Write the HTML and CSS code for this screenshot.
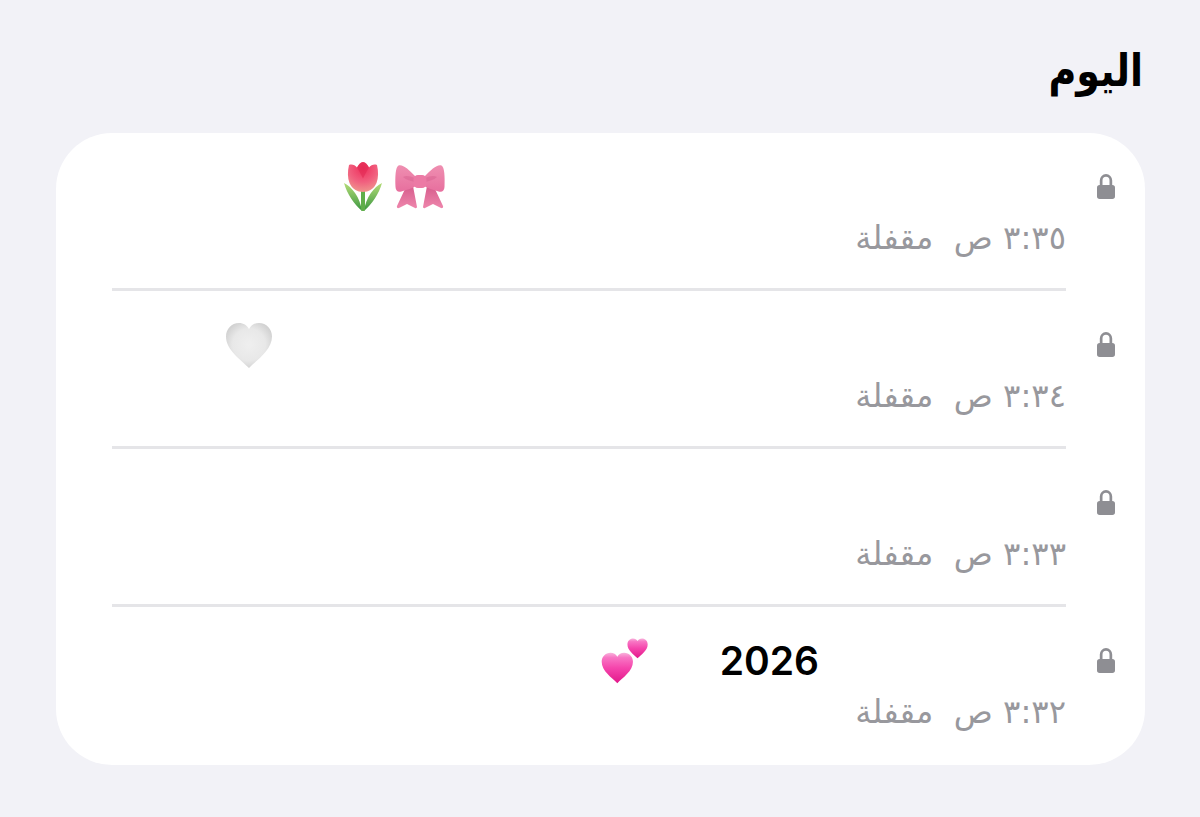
FILE: index.html
```html
<!DOCTYPE html>
<html lang="ar" dir="rtl">
<head>
<meta charset="utf-8">
<title>اليوم</title>
<link rel="stylesheet" href="styles.css">
</head>
<body>
<svg class="defs" width="0" height="0" aria-hidden="true">
  <defs>
    <linearGradient id="pink" x1="0" y1="0" x2="0" y2="1">
      <stop offset="0" stop-color="#f8b4dc"/>
      <stop offset=".16" stop-color="#f876c4"/>
      <stop offset=".5" stop-color="#f545ac"/>
      <stop offset="1" stop-color="#e2188a"/>
    </linearGradient>
    <radialGradient id="silver" cx=".5" cy=".48" r=".55">
      <stop offset="0" stop-color="#efefef"/>
      <stop offset=".65" stop-color="#e8e8e8"/>
      <stop offset="1" stop-color="#d2d2d2"/>
    </radialGradient>
    <radialGradient id="tulip" cx=".5" cy=".2" r=".85">
      <stop offset="0" stop-color="#ee2f5c"/>
      <stop offset=".55" stop-color="#f1607f"/>
      <stop offset="1" stop-color="#ef9c8f"/>
    </radialGradient>
    <linearGradient id="leaf" x1="0" y1="0" x2="0" y2="1">
      <stop offset="0" stop-color="#b4dc78"/>
      <stop offset="1" stop-color="#3a9640"/>
    </linearGradient>
    <linearGradient id="ribbon" x1="0" y1="0" x2="0" y2="1">
      <stop offset="0" stop-color="#ef8fb1"/>
      <stop offset="1" stop-color="#e76f9e"/>
    </linearGradient>
    <linearGradient id="tail" x1="0" y1="0" x2="0" y2="1">
      <stop offset="0" stop-color="#d65c8c"/>
      <stop offset="1" stop-color="#ee86ac"/>
    </linearGradient>
    <path id="heart" d="M24 46C16 38 1 28 1 14.500 1 7 6.500 1 14 1c4.500 0 8 2.200 10 6 2-3.800 5.500-6 10-6 7.500 0 13 6 13 13.500C47 28 32 38 24 46z"/>
    <path id="lock" d="M2.800 11V6.500a6.200 6.500 0 0 1 12.400 0V11h.1A2.700 2.700 0 0 1 18 13.700v8.600a2.700 2.700 0 0 1-2.700 2.700H2.700A2.700 2.700 0 0 1 0 22.300v-8.600A2.700 2.700 0 0 1 2.700 11zm2.700 0h7V6.500a3.500 3.700 0 0 0-7 0z"/>
  </defs>
</svg>
<main class="screen">
  <h1 class="title">اليوم</h1>
  <section class="card">
    <article class="row">
      <svg class="lock" viewBox="0 0 18 25"><use href="#lock"/></svg>
      <div class="body">
        <div class="msg msg-flowers">
          <svg class="bow" viewBox="0 0 50 46">
            <path fill="url(#tail)" d="M10 25 2 42c-.5 1.500.5 2.500 2 2l8-4 8 4c1 .5 2 0 2-1l-4-21zM32 22l-4 21c0 1 1 1.500 2 1l8-4 8 4c1.500.5 2.500-.5 2-2l-8-17z"/>
            <path fill="url(#ribbon)" d="M20 12C14 6 8 0 3.500 1.500 .5 3 0 13 .5 23c.2 4 2.500 5.500 6 4.500 5-1.500 10-3 13.500-5zM30 12C36 6 42 0 46.500 1.500c3 1.500 3.500 11.500 3 21.500-.2 4-2.500 5.500-6 4.500-5-1.500-10-3-13.500-5z"/>
            <path fill="#d25a8a" opacity=".4" d="M20 14C15 12 11 11 8 13c3 3 8 4 12 5zM30 14c5-2 9-3 12-1-3 3-8 4-12 5z"/>
            <rect x="18.500" y="11" width="13" height="13" rx="4.500" fill="#ec7aa5"/>
          </svg>
          <svg class="tulip" viewBox="0 0 42 50">
            <path fill="url(#leaf)" d="M20 49C12 42 5 32 2 21c8 4 16 14 18 28zM22 49c8-7 15-17 18-28-8 4-16 14-18 28z"/>
            <rect x="19" y="26" width="4" height="23" rx="1.500" fill="#5fae4a"/>
            <path fill="url(#tulip)" d="M7 3c3-1 6 0 8 2.500C16.500 2.500 18.500 0 21 0s4.500 2.500 6 5.500C29 3 32 2 35 3c1.500 6 1.500 13-.5 18-2.500 6-8 9-13.500 9s-11-3-13.500-9c-2-5-2-12-.5-18z"/>
            <path fill="#e02650" opacity=".55" d="M15 5.500c2 3 4 7 6 11 2-4 4-8 6-11-1.500-3-3.500-5.500-6-5.500s-4.500 2.500-6 5.500z"/>
          </svg>
        </div>
        <p class="meta">٣:٣٥ ص  مقفلة</p>
      </div>
    </article>
    <article class="row">
      <svg class="lock" viewBox="0 0 18 25"><use href="#lock"/></svg>
      <div class="body">
        <div class="msg msg-heart">
          <svg class="white-heart" viewBox="0 0 48 47"><use href="#heart" fill="url(#silver)"/></svg>
        </div>
        <p class="meta">٣:٣٤ ص  مقفلة</p>
      </div>
    </article>
    <article class="row">
      <svg class="lock" viewBox="0 0 18 25"><use href="#lock"/></svg>
      <div class="body">
        <div class="msg"></div>
        <p class="meta">٣:٣٣ ص  مقفلة</p>
      </div>
    </article>
    <article class="row">
      <svg class="lock" viewBox="0 0 18 25"><use href="#lock"/></svg>
      <div class="body">
        <div class="msg msg-year">
          <span class="year">2026</span>
          <svg class="hearts" viewBox="0 0 48 48">
            <use href="#heart" fill="url(#pink)" transform="translate(26 1) scale(.44)"/>
            <use href="#heart" fill="url(#pink)" transform="translate(0 15) scale(.68)"/>
          </svg>
        </div>
        <p class="meta">٣:٣٢ ص  مقفلة</p>
      </div>
    </article>
  </section>
</main>
</body>
</html>
```
FILE: styles.css
```css
html, body {
  margin: 0;
  height: 100%;
}
body {
  background: #f2f2f7;
  font-family: "DejaVu Sans", sans-serif;
  overflow: hidden;
}
.defs {
  position: absolute;
}
.screen {
  display: flex;
  flex-direction: column;
  padding: 0 55px 0 56px;
}
.title {
  margin: 0;
  height: 133px;
  padding: 38px 2px 0 0;
  box-sizing: border-box;
  font-size: 38px;
  line-height: 52px;
  font-weight: 700;
  color: #000;
  transform: scaleY(1.18);
  transform-origin: 50% 25px;
}
.card {
  display: flex;
  flex-direction: column;
  height: 632px;
  padding: 0 30px 0 56px;
  background: #fff;
  border-radius: 56px;
}
.row {
  flex: 1;
  display: flex;
  gap: 31px;
  padding-top: 41px;
  box-sizing: border-box;
}
.lock {
  flex: none;
  width: 18px;
  height: 25px;
  fill: #8e8e93;
}
.body {
  flex: 1;
  display: flex;
  flex-direction: column;
  margin-top: -13px;
  border-bottom: 3px solid #e5e5e8;
}
.row:last-child .body {
  border-bottom-color: transparent;
}
.msg {
  height: 52px;
  display: flex;
  align-items: center;
}
.msg-flowers {
  padding-right: 621px;
  gap: 11px;
}
.msg-heart {
  padding-right: 793px;
}
.msg-year {
  padding-right: 247px;
  gap: 71px;
}
.bow {
  width: 50px;
  height: 46px;
  flex: none;
}
.tulip {
  width: 42px;
  height: 50px;
  flex: none;
}
.white-heart {
  width: 48px;
  height: 47px;
  flex: none;
}
.hearts {
  width: 48px;
  height: 48px;
  flex: none;
}
.year {
  direction: ltr;
  font-family: "Inter", "Liberation Sans", sans-serif;
  font-size: 39px;
  font-weight: 600;
  line-height: 46px;
  color: #000;
}
.meta {
  margin: 0;
  padding-top: 3px;
  font-size: 32.3px;
  line-height: 44px;
  color: #98989d;
  white-space: pre;
}
```
